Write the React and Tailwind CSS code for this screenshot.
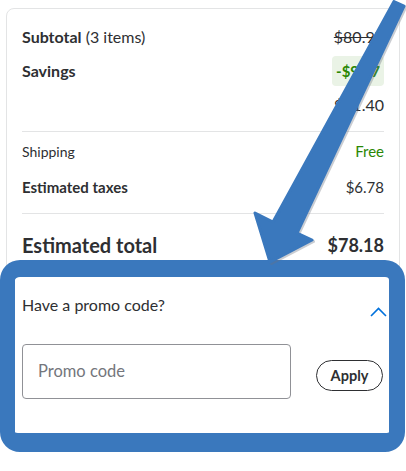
import React from "react";

function Arrow() {
  const pts = "394,1.5 273,222 255,213 270,262 312,240 297,233 404,6";
  return (
    <svg
      className="absolute left-0 top-0 pointer-events-none"
      width="406"
      height="471"
      viewBox="0 0 406 471"
    >
      <polygon
        points={pts}
        fill="#6b7280"
        opacity="0.35"
        stroke="#6b7280"
        strokeWidth="3"
        strokeLinejoin="round"
        transform="translate(1.5,1.5)"
      />
      <polygon
        points={pts}
        fill="#3a78bd"
        stroke="#3a78bd"
        strokeWidth="3"
        strokeLinejoin="round"
      />
    </svg>
  );
}

export default function App() {
  return (
    <div
      className="relative w-[406px] h-[471px] overflow-hidden bg-white text-[#2e2f32]"
      style={{ fontFamily: "Lato, 'Noto Sans', sans-serif" }}
    >
      <div className="ml-[6px] mt-[8px] w-[394px] rounded-[8px] border border-[#e3e4e5] px-[15px] pt-[16px] pb-[40px]">
        <div className="flex items-center justify-between h-[24px] text-[16px]">
          <div>
            <span className="font-bold">Subtotal</span> (3 items)
          </div>
          <div className="line-through">$80.97</div>
        </div>
        <div className="mt-[7px] flex items-center justify-between h-[30px] text-[16px]">
          <div className="font-bold">Savings</div>
          <div className="h-[30px] px-[4px] flex items-center rounded-[4px] bg-[#eaf3e6] text-[#2a8703] font-bold text-[15px]">
            -$9.57
          </div>
        </div>
        <div className="mt-[7px] flex items-center justify-end h-[24px] text-[16px]">
          $71.40
        </div>
        <div className="mt-[14px] h-px bg-[#e3e4e5]" />
        <div className="mt-[9px] flex items-center justify-between h-[20px] text-[14px]">
          <div>Shipping</div>
          <div className="text-[#2a8703] text-[15px]">Free</div>
        </div>
        <div className="mt-[15px] flex items-center justify-between h-[22px] text-[15px]">
          <div className="font-bold">Estimated taxes</div>
          <div>$6.78</div>
        </div>
        <div className="mt-[15px] h-px bg-[#e3e4e5]" />
        <div className="mt-[17px] flex items-center justify-between h-[28px]">
          <div className="font-bold text-[20px]">Estimated total</div>
          <div className="font-bold text-[18px]">$78.18</div>
        </div>
        <div className="mt-[34px] flex items-start justify-between">
          <div className="text-[16px] leading-[24px]">Have a promo code?</div>
          <svg className="mt-[14px] mr-[-3px]" width="17" height="10" viewBox="0 0 17 10">
            <polyline
              points="1,9 8.5,1.5 16,9"
              fill="none"
              stroke="#0071dc"
              strokeWidth="1.6"
            />
          </svg>
        </div>
        <div className="mt-[27px] flex items-start">
          <div className="w-[269px] h-[55px] rounded-[4px] border border-[#909196] flex items-center pl-[15px] text-[16.5px] text-[#74767c]">
            Promo code
          </div>
          <div className="ml-[25px] mt-[16px] w-[67px] h-[31px] rounded-full border border-[#2e2f32] flex items-center justify-center font-bold text-[14.5px]">
            Apply
          </div>
        </div>
      </div>

      <div className="absolute left-0 top-[260px] w-[405px] h-[192px] rounded-[20px] border-t-[17px] border-l-[15px] border-r-[16px] border-b-[19px] border-[#3a78bd] pointer-events-none" />

      <Arrow />
    </div>
  );
}
